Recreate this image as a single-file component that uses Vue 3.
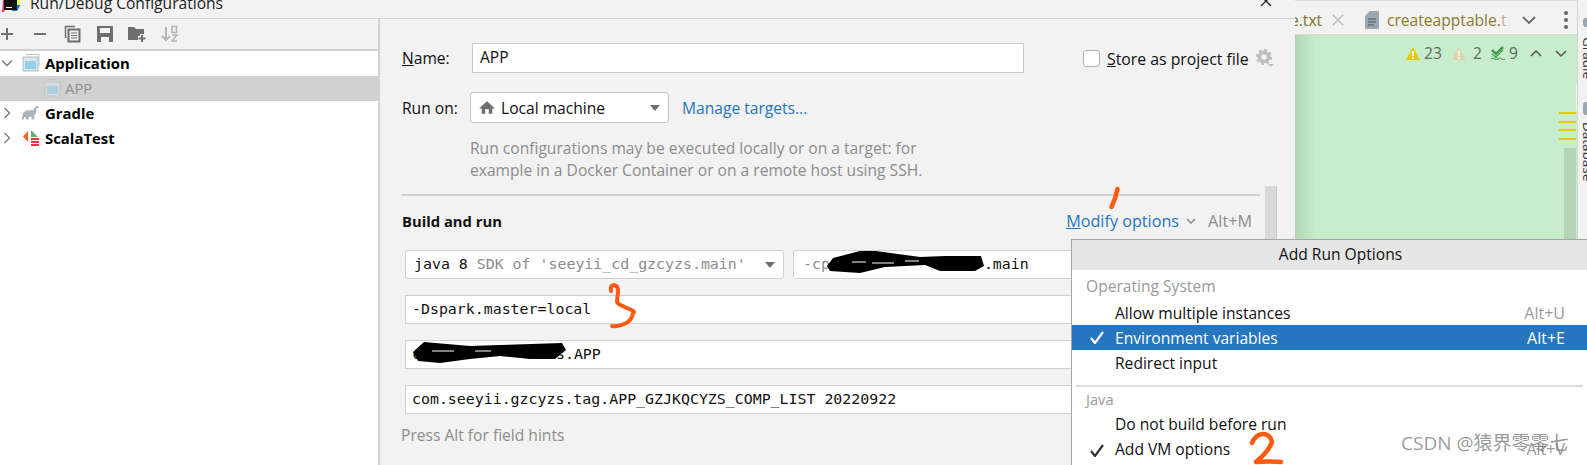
<script setup>
const tools = ['plus', 'minus', 'copy', 'save', 'folder', 'sort']
</script>

<template>
  <div class="screen">
    <section class="dialog">
      <header class="titlebar">
        <svg class="logo" width="20" height="12" viewBox="0 0 20 12">
          <path d="M2 0h6l-5 12H1z" fill="#f5317f" />
          <path d="M12 0h7v6l-3 5h-5z" fill="#087cfa" />
          <path d="M3 0h13v10H3z" fill="#111" />
          <path d="M5 7h6v1H5z" fill="#fff" />
          <path d="M16 0h3v5h-3z" fill="#fcf84a" />
        </svg>
        <span class="title">Run/Debug Configurations</span>
        <svg class="close" width="14" height="8" viewBox="0 0 14 8"><path d="M2 -4l10 10M12 -4L2 6" stroke="#222" stroke-width="1.3" fill="none" /></svg>
      </header>
      <div class="body">
        <aside class="side">
          <div class="toolbar">
            <span v-for="t in tools" :key="t" class="tool">
              <svg width="18" height="18" viewBox="0 0 18 18">
                <path v-if="t === 'plus'" d="M9 3v12M3 9h12" stroke="#6e6e6e" stroke-width="2" />
                <path v-else-if="t === 'minus'" d="M3 9h12" stroke="#6e6e6e" stroke-width="2" />
                <g v-else-if="t === 'copy'" fill="none" stroke="#6e6e6e">
                  <path d="M2.500 13V1.500H12" stroke-width="1.500" />
                  <path d="M5.500 4.500h11v12h-11z" stroke-width="2" />
                  <path d="M8 8h6M8 10.500h6M8 13h6" stroke-width="1.200" />
                </g>
                <g v-else-if="t === 'save'">
                  <path d="M1 1h16v16H1z" fill="#6e6e6e" />
                  <path d="M4 3h10v5H4zM5 12h8v5H5z" fill="#f2f2f2" />
                </g>
                <g v-else-if="t === 'folder'">
                  <path d="M0 2h6l2 2h8v8H11v3H0z" fill="#6e6e6e" />
                  <path d="M14 9v8M10 13h8" stroke="#f2f2f2" stroke-width="4" />
                  <path d="M14 10v7M10.500 13.500h7" stroke="#6e6e6e" stroke-width="2" />
                </g>
                <g v-else>
                  <path d="M5 2v13M1 11l4 4 4-4" fill="none" stroke="#b5b5b5" stroke-width="2" />
                  <path d="M11 1.500h4.500v6H11zM11 10h5l-5 6h5" fill="none" stroke="#b5b5b5" stroke-width="1.600" />
                </g>
              </svg>
            </span>
          </div>
          <ul class="tree">
            <li class="node">
              <svg class="arrow" width="12" height="12" viewBox="0 0 12 12"><path d="M1 3.500l5 5 5-5" fill="none" stroke="#777" stroke-width="1.300" /></svg>
              <svg class="ticon" width="18" height="18" viewBox="0 0 18 18">
                <path d="M4 .5h13v12" fill="none" stroke="#b8c4cc" />
                <path d="M1 3h15v14H1z" fill="#dfe6ea" stroke="#b0bec7" />
                <path d="M3 7h11v8H3z" fill="#8fd0ec" />
              </svg>
              <b>Application</b>
            </li>
            <li class="node selected">
              <svg class="child-icon" width="18" height="18" viewBox="0 0 18 18" opacity=".55">
                <path d="M4 .5h13v12" fill="none" stroke="#b8c4cc" />
                <path d="M1 3h15v14H1z" fill="#dfe6ea" stroke="#b0bec7" />
                <path d="M3 7h11v8H3z" fill="#8fd0ec" />
              </svg>
              <span>APP</span>
            </li>
            <li class="node">
              <svg class="arrow" width="12" height="12" viewBox="0 0 12 12"><path d="M3.500 1l5 5-5 5" fill="none" stroke="#777" stroke-width="1.300" /></svg>
              <svg class="ticon" width="18" height="15" viewBox="0 0 19 15">
                <path d="M0 15c0-6 2-10 7-10h5c1-3 3-5 5-4l1 2-2-.5c-1 .5-1 2-1 3.500 0 3-1 4-2 4v5h-3v-3H7v3H4v-3c-1 0-2 1-2 3z" fill="#a9b6bd" />
              </svg>
              <b>Gradle</b>
            </li>
            <li class="node">
              <svg class="arrow" width="12" height="12" viewBox="0 0 12 12"><path d="M3.500 1l5 5-5 5" fill="none" stroke="#777" stroke-width="1.300" /></svg>
              <svg class="ticon" width="18" height="18" viewBox="0 0 18 18">
                <path d="M6 2v11L1 7.500z" fill="#f26522" />
                <path d="M9 1l7 7H9z" fill="#5cb85c" />
                <path d="M9 9h8v2H9zM9 12h8v2H9zM9 15h8v2H9z" fill="#e8383d" />
              </svg>
              <b>ScalaTest</b>
            </li>
          </ul>
        </aside>

        <main class="panel">
          <div class="name-row">
            <label class="name-label"><u>N</u>ame:</label>
            <div class="name-input">APP</div>
            <span class="check"></span>
            <span class="store"><u>S</u>tore as project file</span>
            <svg class="gear" width="18" height="18" viewBox="0 0 18 18">
              <circle cx="8" cy="8" r="4.500" fill="none" stroke="#bdbdbd" stroke-width="3.500" />
              <circle cx="8" cy="8" r="7" fill="none" stroke="#bdbdbd" stroke-width="2.200" stroke-dasharray="2.800 2.700" />
              <path d="M12 15h6l-3 3z" fill="#bdbdbd" />
            </svg>
          </div>
          <div class="run-row">
            <label class="run-label">Run on:</label>
            <div class="combo">
              <svg width="16" height="13" viewBox="0 0 18 14"><path d="M9 0l9 8h-3v6h-4V9H7v5H3V8H0z" fill="#6e6e6e" /></svg>
              <span>Local machine</span>
              <i class="caret"></i>
            </div>
            <a class="link">Manage targets...</a>
          </div>
          <p class="help">Run configurations may be executed locally or on a target: for<br />example in a Docker Container or on a remote host using SSH.</p>
          <div class="sep"></div>
          <div class="build-row">
            <b>Build and run</b>
            <a class="link modify"><u>M</u>odify options</a>
            <svg class="mini" width="10" height="6" viewBox="0 0 10 6"><path d="M1 1l4 4 4-4" fill="none" stroke="#8a8a8a" stroke-width="1.500" /></svg>
            <span class="hint">Alt+M</span>
          </div>
          <div class="fields">
            <div class="split">
              <div class="field sdk">
                <span>java 8</span><span class="dim"> SDK of 'seeyii_cd_gzcyzs.main'</span>
                <i class="caret"></i>
              </div>
              <div class="field cp"><span class="dim">-cp</span><span class="gap-cp"></span>.main</div>
            </div>
            <div class="field">-Dspark.master=local</div>
            <div class="field">c<span class="gap-main"></span>s.APP</div>
            <div class="field">com.seeyii.gzcyzs.tag.APP_GZJKQCYZS_COMP_LIST 20220922</div>
          </div>
          <p class="press">Press Alt for field hints</p>
        </main>
      </div>
      <div class="scroll"></div>
    </section>

    <section class="editor">
      <div class="tabs">
        <span class="tab-old">e.txt</span>
        <svg class="tab-x" width="12" height="12" viewBox="0 0 12 12"><path d="M1 1l10 10M11 1L1 11" stroke="#bbb" stroke-width="1.200" /></svg>
        <svg class="doc" width="14" height="18" viewBox="0 0 14 18">
          <path d="M5 0h9v18H0V5z" fill="#9aa7b0" />
          <path d="M3 8h8M3 11h8M3 14h6" stroke="#46525b" stroke-width="1.100" />
        </svg>
        <span class="tab-cur">createapptable.<em>t</em></span>
        <svg class="tab-chev" width="14" height="8" viewBox="0 0 14 8"><path d="M1 1l6 6 6-6" fill="none" stroke="#666" stroke-width="1.800" /></svg>
        <span class="dots"><i></i><i></i><i></i></span>
      </div>
      <div class="code">
        <div class="status">
          <svg width="14" height="13" viewBox="0 0 14 13"><path d="M7 0l7 13H0z" fill="#eac800" /><path d="M6 4h2v5H6zM6 10h2v2H6z" fill="#fff" /></svg>
          <span class="n1">23</span>
          <svg class="st2" width="14" height="13" viewBox="0 0 14 13"><path d="M7 0l7 13H0z" fill="#dfd3ae" /><path d="M6 4h2v5H6zM6 10h2v2H6z" fill="#f5efd9" /></svg>
          <span class="n2">2</span>
          <svg class="st3" width="14" height="14" viewBox="0 0 14 14"><path d="M1 4l4 4 7-7" fill="none" stroke="#4e9a55" stroke-width="2.500" /><path d="M1 8l5 4M12 4l-8 8M0 13q2-2 3.500 0t3.500 0 3.500 0 3.500 0" fill="none" stroke="#4e9a55" stroke-width="1.200" /></svg>
          <span class="n3">9</span>
          <svg class="st4" width="12" height="7" viewBox="0 0 12 7"><path d="M1 6l5-5 5 5" fill="none" stroke="#555" stroke-width="1.500" /></svg>
          <svg class="st5" width="12" height="7" viewBox="0 0 12 7"><path d="M1 1l5 5 5-5" fill="none" stroke="#555" stroke-width="1.500" /></svg>
        </div>
        <div class="glint"></div>
        <div class="marks"><i></i><i></i><i></i><i></i></div>
        <div class="thumb"></div>
      </div>
      <div class="strip">
        <i class="strip-ico g"></i>
        <span class="vert">Gradle</span>
        <i class="strip-ico d"></i>
        <span class="vert db">Database</span>
      </div>
    </section>

    <div class="popup">
      <div class="popup-title">Add Run Options</div>
      <div class="group">Operating System</div>
      <div class="item top"><span>Allow multiple instances</span><span class="key">Alt+U</span></div>
      <div class="item top active">
        <svg class="tick" width="14" height="13" viewBox="0 0 14 13"><path d="M1 7l4 5 8-11" fill="none" stroke="#fff" stroke-width="2.200" /></svg>
        <span>Environment variables</span><span class="key">Alt+E</span>
      </div>
      <div class="item top"><span>Redirect input</span></div>
      <div class="popup-sep"></div>
      <div class="group java">Java</div>
      <div class="item"><span>Do not build before run</span></div>
      <div class="item">
        <svg class="tick" width="14" height="13" viewBox="0 0 14 13"><path d="M1 7l4 5 8-11" fill="none" stroke="#333" stroke-width="2.200" /></svg>
        <span>Add VM options</span><span class="key">Alt+V</span>
      </div>
    </div>

    <svg class="ink" width="1587" height="465" viewBox="0 0 1587 465">
      <path d="M833 258L860 251 876 251 920 257 945 256 981 256 984 266 975 271 940 271 925 265 885 267 860 273 830 271 827 266z" fill="#000" />
      <path d="M852 262h14M872 263h22M905 261h14" stroke="#fff" stroke-width="1" />
      <path d="M424 342L470 346 500 345 562 343 566 350 555 359 530 359 500 356 470 359 440 363 418 361 413 352z" fill="#000" />
      <path d="M432 351h22M475 351h16" stroke="#fff" stroke-width="1.200" />
      <g fill="none" stroke="#ff5a10" stroke-linecap="round" stroke-linejoin="round" stroke-width="4">
        <path d="M1117.500 189q-2 10-6 18" stroke-width="4.500" />
        <path d="M611 291q-1-6 3-6 5 1 4 8t-1 9 10 6 6 5q-1 8-9 11-6 3-12 2" />
        <path d="M1252 443q4-9 11-9t9 8q-3 9-16 20 10-1 25 0" stroke-width="4.500" />
      </g>
    </svg>

    <div class="watermark">CSDN @猿界零零七</div>
  </div>
</template>

<style scoped>
.screen {
  position: relative;
  display: flex;
  width: 1587px;
  height: 465px;
  overflow: hidden;
  font-family: "Open Sans", sans-serif;
  font-size: 15.6px;
  color: #111;
}
.dialog {
  position: relative;
  display: flex;
  flex-direction: column;
  width: 1295px;
  flex: none;
  background: #f2f2f2;
}
.titlebar {
  position: relative;
  display: flex;
  align-items: flex-end;
  height: 19px;
  flex: none;
  box-sizing: border-box;
  border-bottom: 1px solid #d4d4d4;
  overflow: hidden;
}
.logo { position: absolute; left: 1px; top: 0; }
.title { margin: 0 0 7px 30px; font-size: 15.6px; line-height: 16px; color: #222; white-space: nowrap; }
.close { position: absolute; left: 1259px; top: 0; }
.body { display: flex; flex: 1; min-height: 0; }
.side {
  width: 380px;
  flex: none;
  box-sizing: border-box;
  border-right: 2px solid #d1d1d1;
}
.toolbar {
  display: flex;
  align-items: center;
  gap: 14.6px;
  height: 32px;
  box-sizing: border-box;
  margin-left: -2px;
  border-bottom: 2px solid #d1d1d1;
}
.tool { display: flex; width: 18px; justify-content: center; }
.tree { list-style: none; margin: 0; padding: 0; background: #fff; height: 414px; }
.node {
  display: flex;
  align-items: center;
  height: 25px;
  box-sizing: border-box;
  padding: 0 0 2px 1px;
  font-size: 14.9px;
  color: #000;
}
.arrow { width: 12px; margin-right: 9px; flex: none; }
.ticon { margin-right: 5px; flex: none; }
.node b { font-weight: 700; }
.selected { background: #d1d1d1; color: #8e8e8e; padding-left: 44px; }
.child-icon { margin-right: 3px; }
.panel { flex: 1; min-width: 0; padding-left: 22px; overflow: hidden; }
.name-row { display: flex; align-items: center; margin-top: 24px; height: 30px; }
.name-label { width: 70px; flex: none; }
.name-input {
  width: 552px;
  height: 30px;
  box-sizing: border-box;
  flex: none;
  padding-left: 7px;
  line-height: 27px;
  background: #fff;
  border: 1px solid #c9c9c9;
}
.check {
  width: 17px;
  height: 17px;
  box-sizing: border-box;
  margin-left: 59px;
  background: #fff;
  border: 1px solid #b0b0b0;
  border-radius: 3px;
}
.store { margin: 2px 0 0 7px; font-size: 15.8px; white-space: nowrap; }
.gear { margin-left: 7px; flex: none; }
.run-row { display: flex; align-items: center; margin-top: 19px; height: 31px; }
.run-label { width: 68px; flex: none; }
.combo {
  position: relative;
  display: flex;
  align-items: center;
  gap: 6px;
  width: 199px;
  height: 31px;
  box-sizing: border-box;
  padding-left: 8px;
  background: #fff;
  border: 1px solid #c4c4c4;
  border-radius: 3px;
}
.caret {
  position: absolute;
  right: 8px;
  top: 50%;
  margin-top: -3px;
  border-left: 5.500px solid transparent;
  border-right: 5.500px solid transparent;
  border-top: 6px solid #6e6e6e;
}
.link { color: #2675bf; }
.run-row .link { margin-left: 13px; }
.help {
  margin: 14px 0 0 68px;
  color: #8c8c8c;
  font-size: 15.6px;
  line-height: 22px;
  white-space: nowrap;
}
.sep { width: 859px; height: 2px; margin: 13px 0 0 -1px; background: #d1d1d1; }
.build-row {
  display: flex;
  align-items: center;
  width: 850px;
  height: 20px;
  margin-top: 15px;
  font-size: 16.2px;
  white-space: nowrap;
}
.build-row b { font-size: 14.8px; }
.modify { margin-left: auto; }
.mini { margin-left: 7px; }
.hint { margin-left: 12px; color: #8c8c8c; }
.fields {
  display: flex;
  flex-direction: column;
  gap: 16px;
  width: 855px;
  margin: 19px 0 0 3px;
  font-family: "DejaVu Sans Mono", monospace;
  font-size: 14.9px;
}
.split { display: flex; gap: 9px; }
.field {
  position: relative;
  height: 29px;
  box-sizing: border-box;
  padding-left: 6px;
  line-height: 27px;
  background: #fff;
  border: 1px solid #d0d0d0;
  white-space: pre;
}
.sdk { width: 379px; flex: none; border-radius: 3px; padding-left: 8px; }
.cp { flex: 1; border-radius: 3px; padding-left: 9px; }
.dim { color: #8c8c8c; }
.gap-cp { display: inline-block; width: 154px; }
.gap-main { display: inline-block; width: 135px; }
.press { margin: 10px 0 0 -1px; color: #8c8c8c; white-space: nowrap; }
.scroll {
  position: absolute;
  left: 1265px;
  top: 186px;
  width: 11px;
  height: 60px;
  background: #d9d9d9;
  border-right: 1px solid #c9c9c9;
}
.editor {
  flex: 1;
  min-width: 0;
  position: relative;
  display: grid;
  grid-template-columns: 1fr 10px;
  grid-template-rows: 35px 1fr;
}
.tabs {
  display: flex;
  align-items: center;
  grid-column: 1;
  background: #f2f2f2;
  border-top: 1px solid #dadada;
  border-bottom: 1px solid #dadada;
  box-sizing: border-box;
  padding-top: 4px;
  font-size: 15.6px;
  white-space: nowrap;
  overflow: hidden;
}
.tab-old { margin-left: -5px; color: #7a6f25; width: 33px; flex: none; }
.tab-x { margin-left: 9px; flex: none; }
.doc { margin-left: 21px; flex: none; }
.tab-cur { margin-left: 8px; color: #8a7c2c; width: 120px; overflow: hidden; flex: none; }
.tab-cur em { font-style: normal; color: #bcb48a; }
.tab-chev { margin-left: 15px; flex: none; }
.dots { display: flex; flex-direction: column; gap: 3px; margin-left: 28px; flex: none; }
.dots i { width: 4px; height: 4px; border-radius: 50%; background: #666; }
.code {
  position: relative;
  grid-column: 1;
  grid-row: 2;
  background: linear-gradient(90deg, #b0d4b6 0, #c8edcc 20px);
}
.status {
  display: flex;
  align-items: center;
  height: 20px;
  margin-top: 8px;
  padding-left: 111px;
  font-size: 15.6px;
  color: #5e6a60;
  white-space: nowrap;
}
.status span { margin-left: 4px; }
.status .n1 { width: 18px; }
.status .n2 { width: 9px; margin-left: 7px; }
.status .n3 { width: 9px; margin-left: 4px; }
.st2 { margin-left: 10px; flex: none; }
.st3 { margin-left: 9px; flex: none; }
.st4 { margin-left: 12px; flex: none; }
.st5 { margin-left: 13px; flex: none; }
.glint { position: absolute; right: 0; top: 50px; width: 1px; height: 26px; background: #f6f6dc; }
.marks {
  position: absolute;
  right: 1px;
  top: 77px;
  display: flex;
  flex-direction: column;
  gap: 6.500px;
}
.marks i { display: block; width: 17px; height: 2px; background: #e9c800; }
.thumb {
  position: absolute;
  right: 1px;
  top: 113px;
  bottom: 0;
  width: 12px;
  background: #b5d3b8;
}
.strip {
  grid-column: 2;
  grid-row: 1 / 3;
  position: relative;
  background: #f2f2f2;
  border-left: 1px solid #d4d4d4;
  overflow: hidden;
}
.vert {
  position: absolute;
  left: 2px;
  top: 37px;
  writing-mode: vertical-rl;
  font-size: 13.500px;
  line-height: 16px;
  color: #333;
}
.db { top: 122px; }
.strip-ico { position: absolute; left: 5px; width: 8px; background: #9aa7b0; border-radius: 3px; }
.g { top: 18px; height: 9px; }
.d { top: 102px; height: 13px; }
.popup {
  position: absolute;
  left: 1071px;
  top: 239px;
  width: 516px;
  height: 226px;
  box-sizing: border-box;
  background: #fff;
  border-top: 1px solid #a5a5a5;
  border-left: 1px solid #a5a5a5;
}
.popup-title {
  height: 30px;
  padding-left: 22px;
  line-height: 28px;
  text-align: center;
  background: #e6e6e6;
  color: #111;
}
.group { height: 25px; line-height: 23px; margin-top: 5px; padding-left: 14px; color: #9a9a9a; }
.java { height: 24px; margin-top: 0; line-height: 20px; font-size: 14.7px; }
.item {
  position: relative;
  display: flex;
  justify-content: space-between;
  height: 25px;
  line-height: 22px;
  padding: 0 22px 0 43px;
  color: #111;
}
.top { line-height: 26px; }
.active { background: #2675bf; color: #fff; }
.key { color: #9a9a9a; font-size: 16px; }
.active .key { color: #fff; }
.tick { position: absolute; left: 18px; top: 6px; }
.popup-sep { height: 2px; margin: 10px 4px 2px 4px; background: #dcdcdc; }
.ink { position: absolute; left: 0; top: 0; pointer-events: none; }
.watermark {
  position: absolute;
  left: 1401px;
  top: 431px;
  font-family: "Open Sans", "Noto Sans CJK SC", sans-serif;
  font-size: 19px;
  line-height: 24px;
  color: rgba(120, 120, 120, .75);
  white-space: nowrap;
}
</style>

<style>
html, body { margin: 0; background: #fff; }
</style>
